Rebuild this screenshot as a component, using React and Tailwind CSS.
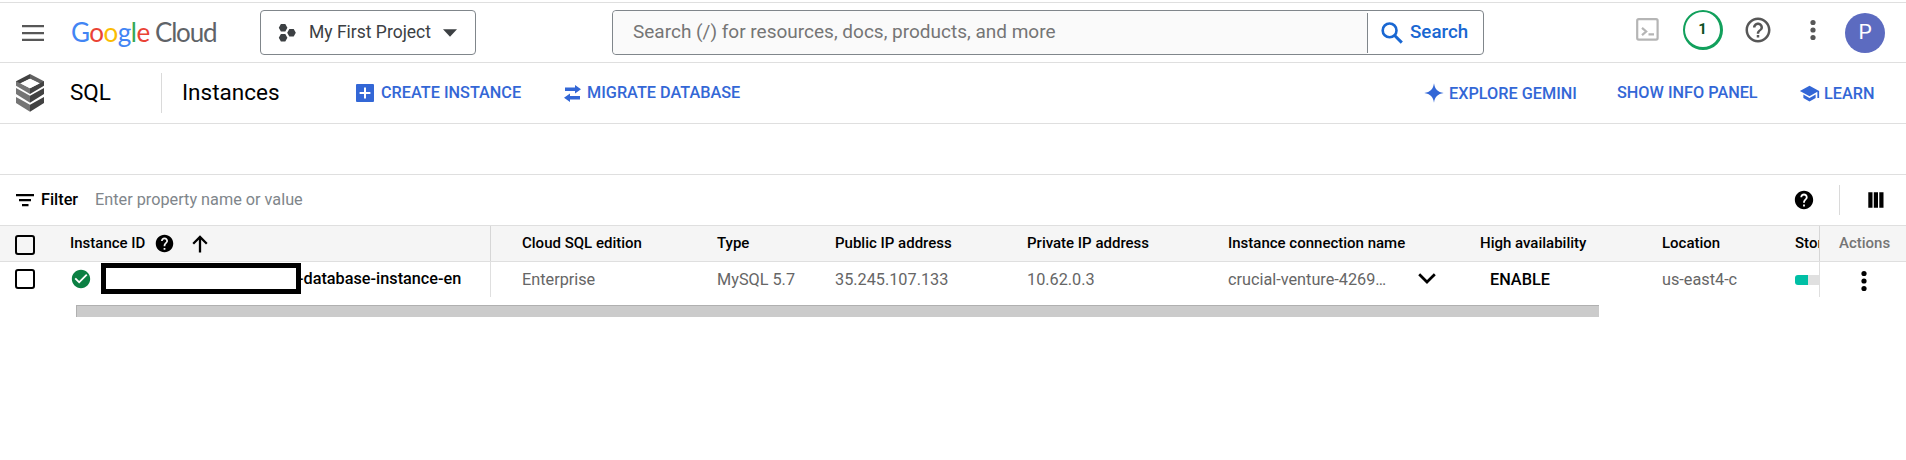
import React from 'react';

const HELP_PATH =
  'M12 2C6.48 2 2 6.48 2 12s4.48 10 10 10 10-4.48 10-10S17.52 2 12 2zm1 17h-2v-2h2v2zm2.07-7.75l-.9.92C13.45 12.9 13 13.5 13 15h-2v-.5c0-1.1.45-2.1 1.17-2.83l1.24-1.26c.37-.36.59-.86.59-1.41 0-1.1-.9-2-2-2s-2 .9-2 2H8c0-2.21 1.79-4 4-4s4 1.79 4 4c0 .88-.36 1.68-.93 2.25z';
const HELP_OUTLINE_PATH =
  'M11 18h2v-2h-2v2zm1-16C6.48 2 2 6.48 2 12s4.48 10 10 10 10-4.48 10-10S17.52 2 12 2zm0 18c-4.41 0-8-3.59-8-8s3.59-8 8-8 8 3.59 8 8-3.59 8-8 8zm0-14c-2.21 0-4 1.79-4 4h2c0-1.1.9-2 2-2s2 .9 2 2c0 2-3 1.75-3 5h2c0-2.25 3-2.5 3-5 0-2.21-1.79-4-4-4z';

function Icon({ d, className }) {
  return (
    <svg viewBox="0 0 24 24" className={`shrink-0 ${className}`} fill="currentColor">
      <path d={d} />
    </svg>
  );
}

function Dots({ className }) {
  return (
    <svg viewBox="0 0 6 22" className={`h-[22px] w-[6px] shrink-0 ${className}`} fill="currentColor">
      <circle cx="3" cy="3.5" r="2.6" />
      <circle cx="3" cy="11" r="2.6" />
      <circle cx="3" cy="18.5" r="2.6" />
    </svg>
  );
}

function SqlIcon() {
  return (
    <svg viewBox="0 0 84 114" className="ml-4 h-[38px] w-[28px] shrink-0">
      <path d="M42 0L0 22v12l14-6 28-14z" fill="#424242" />
      <path d="M42 0l42 22v12l-14-6-28-14z" fill="#616161" />
      <path d="M0 22l42 21v17L0 35z" fill="#757575" />
      <path d="M84 22L42 43v17l42-25z" fill="#424242" />
      <path d="M42 14l28 14-28 15-28-15z" fill="#fff" />
      <path d="M0 42l42 23v21L0 60z" fill="#757575" />
      <path d="M84 42L42 65v21l42-26z" fill="#424242" />
      <path d="M0 69l42 23v21L0 87z" fill="#757575" />
      <path d="M84 69L42 92v21l42-26z" fill="#424242" />
    </svg>
  );
}

function TopBar() {
  return (
    <header className="flex h-[61px] items-center border-y border-[#dfdfdf]">
      <svg viewBox="0 0 22 16" className="ml-[22px] h-[16px] w-[22px] shrink-0" fill="#575757">
        <path d="M0 0h22v2.3H0zM0 6.9h22v2.3H0zM0 13.8h22v2.3H0z" />
      </svg>
      <div className="ml-[27px] flex w-[189px] items-baseline pb-[2px] font-['Lato',sans-serif] text-[26px] leading-none">
        <span className="w-[84px] tracking-[-0.5px]">
          <span className="text-[#4285f4]">G</span>
          <span className="text-[#ea4335]">o</span>
          <span className="text-[#fbbc04]">o</span>
          <span className="text-[#4285f4]">g</span>
          <span className="text-[#34a853]">l</span>
          <span className="text-[#ea4335]">e</span>
        </span>
        <span className="tracking-[-1.2px] text-[#5f6368]">Cloud</span>
      </div>
      <button className="flex h-[45px] w-[216px] items-center rounded border border-[#80868b] text-[17.5px] text-[#3c4043]">
        <svg viewBox="0 0 18 20" className="ml-[17px] h-5 w-[18px] shrink-0" fill="#3c4043">
          <path d="M2.9 1h4.4l2.1 3.7-2.1 3.7H2.9L.8 4.700zM2.9 11h4.4l2.1 3.700-2.1 3.700H2.900L.8 14.700zM11.300 5.900h4.400l2.100 3.800-2.100 3.800h-4.400L9.200 9.700z" />
        </svg>
        <span className="ml-[13px] w-[134px] text-left">My First Project</span>
        <svg viewBox="0 0 14 8" className="h-[8px] w-[14px] shrink-0" fill="#3c4043">
          <path d="M0 .3h14L7 7.8z" />
        </svg>
      </button>
      <div className="ml-[136px] flex h-[45px] w-[872px] items-center rounded border border-[#80868b]">
        <div className="flex h-full w-[754px] items-center rounded-l bg-[#fafafa] pl-[20px] text-[19px] text-[#757575]">
          Search (/) for resources, docs, products, and more
        </div>
        <div className="h-[40px] w-px bg-[#80868b]" />
        <div className="flex items-center text-[18.75px] font-medium text-[#1967d2]">
          <svg viewBox="0 0 22 22" className="ml-[13px] h-[22px] w-[22px] shrink-0" fill="none" stroke="currentColor" strokeWidth="2.6">
            <circle cx="8.6" cy="8.4" r="6.9" />
            <path d="M13.4 13.2l7.4 7.4" strokeWidth="3" />
          </svg>
          <span className="ml-[7px]">Search</span>
        </div>
      </div>
      <svg viewBox="0 0 23 23" className="mb-[6px] ml-[152px] h-[23px] w-[23px] shrink-0" fill="none" stroke="#b5b5b5" strokeWidth="2.2">
        <rect x="1.2" y="1.2" width="20.4" height="20.4" rx="1.5" />
        <path d="M6 9.8l4.2 3.7L6 17.2M12.5 16.4H18" />
      </svg>
      <div className="mb-[5px] ml-[24px] flex h-[40px] w-[40px] shrink-0 items-center justify-center rounded-full border-t-2 border-r-[3px] border-b-[3px] border-l-2 border-[#12a05c] text-[15px] font-bold text-[#0d4f22]">
        1
      </div>
      <Icon d={HELP_OUTLINE_PATH} className="mb-[5px] ml-5 h-[30px] w-[30px] text-[#575757]" />
      <Dots className="mb-[5px] ml-[37px] text-[#575757]" />
      <div className="ml-[29px] flex h-[40px] w-[40px] shrink-0 items-center justify-center rounded-full bg-[#5c6bc0] text-[21px] text-white">
        P
      </div>
    </header>
  );
}

function ActionBar() {
  return (
    <div className="flex h-[61px] items-center border-b border-[#dfdfdf] text-[16.25px] font-medium text-[#3367d6]">
      <SqlIcon />
      <span className="ml-[26px] w-[91px] text-[22.5px] font-normal text-black">SQL</span>
      <span className="h-[40px] w-px bg-[#dadada]" />
      <span className="ml-[20px] w-[174px] text-[22.5px] font-normal text-black">Instances</span>
      <svg viewBox="0 0 18 18" className="h-[18px] w-[18px] shrink-0">
        <rect width="18" height="18" rx="1" fill="#3367d6" />
        <path d="M9 3.6v10.8M3.6 9h10.8" stroke="#fff" strokeWidth="2" />
      </svg>
      <span className="ml-[7px] w-[183px]">CREATE INSTANCE</span>
      <svg viewBox="0 0 17 17" className="h-[17px] w-[17px] shrink-0" fill="currentColor">
        <path d="M1 2.6h10V0l6 4.3-6 4.3V6H1zM16 11H6V8.4L0 12.7 6 17v-2.6h10z" />
      </svg>
      <span className="ml-[6px] w-[837px]">MIGRATE DATABASE</span>
      <svg viewBox="0 0 20 20" className="h-[20px] w-[20px] shrink-0" fill="currentColor">
        <path d="M10 .3c.9 6 3.700 8.800 9.700 9.700-6 .9-8.800 3.700-9.700 9.700-.9-6-3.700-8.800-9.700-9.700 6-.9 8.800-3.700 9.700-9.700z" />
      </svg>
      <span className="ml-[5px] mt-[2px] w-[168px]">EXPLORE GEMINI</span>
      <span className="w-[182px]">SHOW INFO PANEL</span>
      <Icon d="M5 13.180v4L12 21l7-3.820v-4L12 17l-7-3.820zM12 3L1 9l11 6 9-4.910V17h2V9L12 3z" className="h-[21px] w-[21px]" />
      <span className="ml-[4px] mt-[2px]">LEARN</span>
    </div>
  );
}

function FilterBar() {
  return (
    <div className="flex h-[51px] items-center border-b border-[#dfdfdf] text-[16.25px]">
      <svg viewBox="0 0 18 13" className="ml-4 h-[13px] w-[18px] shrink-0">
        <path d="M0 0h18v2.200H0zM3 5h12v2.200H3zM6 10h6.500v2.200H6z" />
      </svg>
      <span className="ml-[7px] w-[54px] font-medium">Filter</span>
      <span className="grow text-[#80868b]">Enter property name or value</span>
      <Icon d={HELP_PATH} className="h-[22px] w-[22px]" />
      <span className="ml-[24px] h-[30px] w-px bg-[#dadada]" />
      <svg viewBox="0 0 16 16" className="ml-[28px] mr-[22px] h-4 w-4 shrink-0">
        <path d="M.3.3h4.200v15.400H.3zM5.800.3h4.200v15.400H5.800zM11.300.3h4.200v15.400h-4.200z" />
      </svg>
    </div>
  );
}

const COLUMNS = 'grid grid-cols-[491px_195px_118px_192px_201px_253px_181px_133px_56px_86px]';

function Checkbox() {
  return <span className="ml-[15px] h-[20px] w-[20px] shrink-0 rounded-[3px] border-2 border-black" />;
}

function HeadRow() {
  return (
    <div className={`${COLUMNS} h-[36px] items-center border-b border-[#dfdfdf] bg-[#f5f5f5] text-[15px] font-medium whitespace-nowrap text-black`}>
      <div className="flex h-full items-center border-r border-[#d6d6d6]">
        <span className="mt-[3px] flex">
          <Checkbox />
        </span>
        <span className="ml-[35px] w-[84px]">Instance ID</span>
        <Icon d={HELP_PATH} className="h-[21px] w-[21px]" />
        <svg viewBox="0 0 16 18" className="ml-[17px] h-[18px] w-[16px] shrink-0" fill="none" stroke="#000" strokeWidth="2.3">
          <path d="M8 17.500V2.200M1.200 8.800L8 2l6.800 6.800" />
        </svg>
      </div>
      <span className="pl-[31px]">Cloud SQL edition</span>
      <span className="pl-[31px]">Type</span>
      <span className="pl-[31px]">Public IP address</span>
      <span className="pl-[31px]">Private IP address</span>
      <span className="pl-[31px]">Instance connection name</span>
      <span className="pl-[30px]">High availability</span>
      <span className="pl-[31px]">Location</span>
      <span className="flex h-full items-center overflow-hidden border-r border-[#d6d6d6] pl-[31px]">Stor</span>
      <span className="pl-[19px] text-[#757575]">Actions</span>
    </div>
  );
}

function InstanceRow() {
  return (
    <div className={`${COLUMNS} h-[35px] items-center text-[16.25px] whitespace-nowrap text-[#666]`}>
      <div className="flex h-full items-center border-r border-[#dfdfdf]">
        <span className="mb-[2px] flex">
          <Checkbox />
        </span>
        <Icon d="M12 2C6.480 2 2 6.480 2 12s4.480 10 10 10 10-4.480 10-10S17.520 2 12 2zm-2 15l-5-5 1.410-1.410L10 14.170l7.590-7.590L19 8l-9 9z" className="ml-[35px] mb-[1px] h-[22px] w-[22px] text-[#0b8043]" />
        <span className="z-10 mb-[2px] ml-[9px] h-[31px] w-[200px] shrink-0 border-[5px] border-black bg-white" />
        <span className="-ml-[3px] mb-[1px] font-medium text-black">-database-instance-en</span>
      </div>
      <span className="mt-[1px] pl-[31px]">Enterprise</span>
      <span className="mt-[1px] pl-[31px]">MySQL 5.7</span>
      <span className="mt-[1px] pl-[31px]">35.245.107.133</span>
      <span className="mt-[1px] pl-[31px]">10.62.0.3</span>
      <span className="mt-[1px] flex items-center pl-[31px]">
        <span className="w-[190px]">crucial-venture-4269…</span>
        <svg viewBox="0 0 18 11" className="mb-[4px] h-[11px] w-[18px] shrink-0" fill="none" stroke="#000" strokeWidth="2.7">
          <path d="M1.200 1.200L9 9l7.800-7.800" />
        </svg>
      </span>
      <span className="mt-[1px] pl-[40px] font-medium text-black">ENABLE</span>
      <span className="mt-[1px] pl-[31px]">us-east4-c</span>
      <span className="flex h-full items-center border-r border-[#dfdfdf] pl-[31px]">
        <span className="h-[10px] w-[13px] rounded-l-[3px] bg-[#00bfa5]" />
        <span className="h-[10px] grow bg-[#e0e0e0]" />
      </span>
      <Dots className="ml-[41px] mt-[3px] text-black" />
    </div>
  );
}

export default function App() {
  return (
    <div className="h-[460px] w-[1906px] overflow-hidden bg-white pt-[2px] font-['Roboto',sans-serif] text-black">
      <TopBar />
      <ActionBar />
      <div className="h-[51px] border-b border-[#dfdfdf]" />
      <FilterBar />
      <HeadRow />
      <InstanceRow />
      <div className="mt-[8px] ml-[76px] h-[12px] w-[1523px] border-t border-l border-[#b0b0b0] bg-[#cbcbcb]" />
    </div>
  );
}
